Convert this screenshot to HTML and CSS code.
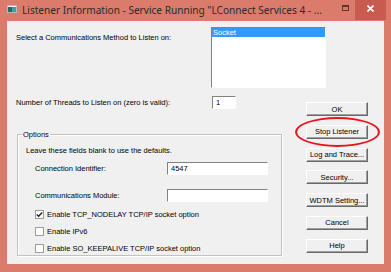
FILE: index.html
```html
<!DOCTYPE html>
<html lang="en">
<head>
    <meta charset="UTF-8">
    <title>Listener Information</title>
    <link rel="stylesheet" href="styles.css">
</head>
<body>
    <div class="window">
        <div class="titlebar">
            <svg class="app-icon" width="10" height="8" viewBox="0 0 10 8">
                <rect x="0.5" y="0.5" width="9" height="7" fill="#f4f4f4" stroke="#b8b8b8"/>
                <rect x="1" y="2" width="4" height="5" fill="#1f6b6b"/>
                <rect x="5" y="2" width="4" height="5" fill="#3aa59a"/>
            </svg>
            <div class="title">Listener Information - Service Running "LConnect Services 4 - ...</div>
            <div class="controls">
                <div class="max-btn"><span class="max-icon"></span></div>
                <div class="close-btn">
                    <svg width="7" height="7" viewBox="0 0 7 7">
                        <path d="M0.5 0.5 L6.5 6.5 M6.5 0.5 L0.5 6.5" stroke="#fff" stroke-width="1.6"/>
                    </svg>
                </div>
            </div>
        </div>

        <div class="client">
            <div class="row-top">
                <div class="label-wide">Select a Communications Method to Listen on:</div>
                <div class="listbox">
                    <div class="list-item selected">Socket</div>
                </div>
            </div>

            <div class="lower">
                <div class="left-col">
                    <div class="threads-row">
                        <label class="threads-label" for="threads">Number of Threads to Listen on (zero is valid):</label>
                        <input class="field threads-field" type="text" id="threads" value="1">
                    </div>

                    <fieldset class="options">
                        <legend>Options</legend>
                        <div class="hint">Leave these fields blank to use the defaults.</div>
                        <div class="field-row">
                            <label class="field-label" for="connId">Connection Identifier:</label>
                            <input class="field wide-field" type="text" id="connId" value="4547">
                        </div>
                        <div class="field-row second">
                            <label class="field-label" for="commModule">Communications Module:</label>
                            <input class="field wide-field" type="text" id="commModule" value="">
                        </div>
                        <div class="check-row first">
                            <span class="checkbox">
                                <svg width="7" height="7" viewBox="0 0 7 7">
                                    <path d="M0.8 3.4 L2.6 5.2 L6.2 1.4" fill="none" stroke="#222" stroke-width="1.4"/>
                                </svg>
                            </span>
                            <span>Enable TCP_NODELAY TCP/IP socket option</span>
                        </div>
                        <div class="check-row">
                            <span class="checkbox"></span>
                            <span>Enable IPv6</span>
                        </div>
                        <div class="check-row">
                            <span class="checkbox"></span>
                            <span>Enable SO_KEEPALIVE TCP/IP socket option</span>
                        </div>
                    </fieldset>
                </div>

                <div class="buttons">
                    <button class="btn">OK</button>
                    <button class="btn">Stop Listener</button>
                    <button class="btn">Log and Trace...</button>
                    <button class="btn">Security...</button>
                    <button class="btn">WDTM Setting...</button>
                    <button class="btn">Cancel</button>
                    <button class="btn">Help</button>
                    <div class="highlight"></div>
                </div>
            </div>
        </div>
    </div>
</body>
</html>
```

FILE: styles.css
```css
body {
    margin: 0;
    font-family: "Liberation Sans", Arial, sans-serif;
    font-size: 7.5px;
    line-height: 9px;
    color: #000;
}
.window {
    width: 391px;
    height: 272px;
    background-color: #db7b6c;
    display: flex;
    flex-direction: column;
}
.titlebar {
    height: 21px;
    display: flex;
    align-items: flex-start;
    flex-shrink: 0;
}
.app-icon {
    margin: 5px 0 0 7px;
    flex-shrink: 0;
}
.title {
    margin-left: 5px;
    font-family: "Noto Sans", sans-serif;
    font-size: 10.1px;
    line-height: 20px;
    color: #2b2b2b;
    white-space: nowrap;
}
.controls {
    margin-left: auto;
    margin-right: 5px;
    display: flex;
}
.max-btn {
    width: 26px;
    height: 20px;
    box-sizing: border-box;
    display: flex;
    justify-content: flex-end;
    padding: 5px 6px 0 0;
}
.max-icon {
    width: 7px;
    height: 6px;
    box-sizing: border-box;
    border: 1px solid #5e3630;
    border-top-width: 2px;
}
.close-btn {
    width: 31px;
    height: 20px;
    background-color: #c85a50;
    display: flex;
    justify-content: center;
    padding-top: 5px;
    box-sizing: border-box;
}
.client {
    flex: 1;
    margin: 0 7px 8px 7px;
    padding: 6px 16px 0 9px;
    background-color: #f0f0f0;
    box-sizing: border-box;
}
.row-top {
    display: flex;
    align-items: flex-start;
}
.label-wide {
    width: 195px;
    margin-top: 5.5px;
}
.listbox {
    width: 115px;
    height: 61px;
    box-sizing: border-box;
    border: 1px solid;
    border-color: #828282 #fff #fff #828282;
    background-color: #fff;
}
.list-item {
    height: 9px;
    padding-left: 1px;
}
.list-item.selected {
    background-color: #3399ff;
    color: #fff;
}
.lower {
    display: flex;
    margin-top: 8px;
}
.left-col {
    width: 266px;
}
.threads-row {
    display: flex;
    align-items: center;
    height: 13px;
}
.threads-label {
    width: 196px;
}
.field {
    box-sizing: border-box;
    height: 13px;
    margin: 0;
    padding: 0 0 0 3px;
    border: 1px solid;
    border-color: #828282 #fff #fff #828282;
    background-color: #fff;
    font: inherit;
    color: #000;
    outline: none;
}
.threads-field {
    width: 24px;
}
.options {
    width: 265px;
    box-sizing: border-box;
    margin: 20.5px 0 0 1px;
    padding: 0 0 2px 0;
    border: 1px solid #c2c2c2;
    box-shadow: inset 1px 1px #fff, 1px 1px #fff;
    min-inline-size: 0;
}
.options legend {
    margin-left: 4px;
    padding: 0 1px;
    line-height: 9px;
}
.hint {
    margin: 7px 0 0 8px;
}
.field-row {
    display: flex;
    align-items: center;
    margin: 7.5px 0 0 17px;
}
.field-row.second {
    margin-top: 14px;
}
.field-label {
    width: 132px;
}
.wide-field {
    width: 101px;
}
.check-row {
    display: flex;
    align-items: center;
    height: 9px;
    margin: 8px 0 0 17px;
}
.check-row.first {
    margin-top: 7.5px;
}
.checkbox {
    width: 9px;
    height: 9px;
    box-sizing: border-box;
    border: 1px solid #9a9b9b;
    background-color: #fff;
    margin-right: 3px;
    display: flex;
    align-items: center;
    justify-content: center;
}
.buttons {
    position: relative;
    display: flex;
    flex-direction: column;
    gap: 8.8px;
    margin-left: 24px;
    padding-top: 6px;
}
.btn {
    width: 62px;
    height: 14px;
    box-sizing: border-box;
    padding: 0;
    border: 1px solid;
    border-color: #fff #696969 #696969 #fff;
    box-shadow: inset -1px -1px #a0a0a0;
    background-color: #f0f0f0;
    font: inherit;
    color: #000;
}
.highlight {
    position: absolute;
    left: -11px;
    top: 21px;
    width: 85px;
    height: 30px;
    box-sizing: border-box;
    border: 2.5px solid #e8141c;
    border-radius: 50%;
}
```
